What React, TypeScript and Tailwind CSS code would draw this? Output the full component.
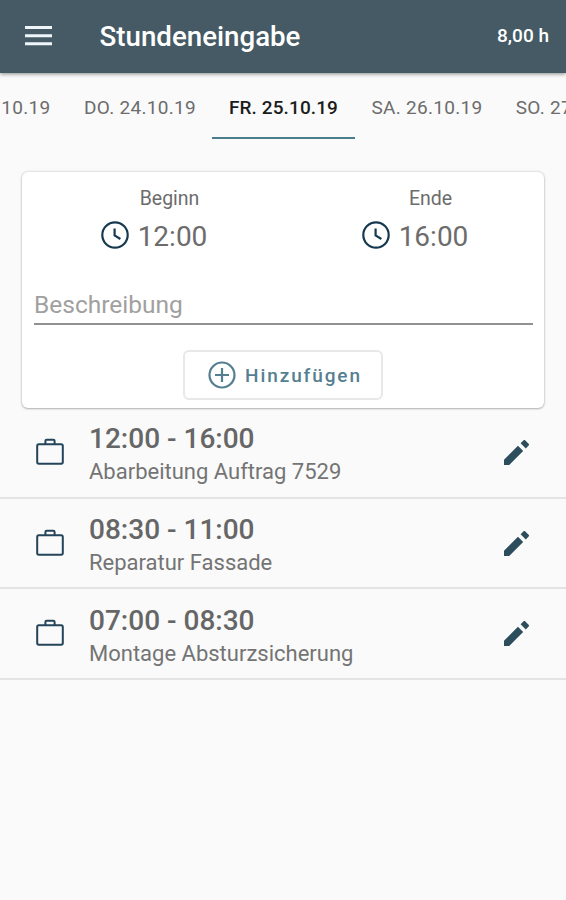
import React from "react";

const days = [
  { label: "MI. 23.10.19", active: false },
  { label: "DO. 24.10.19", active: false },
  { label: "FR. 25.10.19", active: true },
  { label: "SA. 26.10.19", active: false },
  { label: "SO. 27.10.19", active: false },
];

const entries = [
  { time: "12:00 - 16:00", text: "Abarbeitung Auftrag 7529" },
  { time: "08:30 - 11:00", text: "Reparatur Fassade" },
  { time: "07:00 - 08:30", text: "Montage Absturzsicherung" },
];

function ClockIcon() {
  return (
    <svg className="size-7 shrink-0" viewBox="0 0 28 28" fill="none" stroke="#173a50" strokeWidth="2.2">
      <circle cx="14" cy="14" r="12.7" />
      <path d="M13.6 7.4v7l5.8 3.6" />
    </svg>
  );
}

function BriefcaseIcon() {
  return (
    <svg className="mb-0.5 h-[27px] w-7 shrink-0" viewBox="0 0 28 27" fill="none" stroke="#24445a" strokeWidth="2">
      <rect x="1.2" y="6.3" width="25.6" height="19.4" rx="1.6" />
      <path d="M9.4 6.2V3q0-1.3 1.3-1.3h6.6q1.3 0 1.3 1.3v3.2" />
    </svg>
  );
}

function PencilIcon() {
  return (
    <svg className="mr-px size-[25px] shrink-0" viewBox="3 3 18 18" fill="#2b4d5c">
      <path d="M3 17.25V21h3.75L16.8 10.95l-3.75-3.75L3 17.25zM20.71 7.04a1 1 0 0 0 0-1.41l-2.34-2.34a1 1 0 0 0-1.41 0l-2 2 3.75 3.75 2-2z" />
    </svg>
  );
}

function TimeField({ label, value }: { label: string; value: string }) {
  return (
    <div className="flex flex-1 flex-col items-center">
      <span className="pl-[34px] text-[19.5px] leading-6">{label}</span>
      <div className="mt-[7px] flex h-[34px] items-center gap-[9px] pl-[3px]">
        <ClockIcon />
        <span className="pt-[3px] text-[28px] leading-8">{value}</span>
      </div>
    </div>
  );
}

export default function App() {
  return (
    <div className="h-[900px] w-full overflow-hidden bg-[#fafafa] font-['Roboto',sans-serif] text-[#6c6c6c]">
      <header className="relative flex h-[73px] items-center bg-[#455a64] pr-[17px] pl-[25px] text-white shadow-[0_1px_4px_rgba(0,0,0,0.45)]">
        <svg className="mb-[2px] h-5 w-[27px]" viewBox="0 0 27 20" fill="#eef6fa">
          <path d="M0 0h27v3H0zM0 8.2h27v3H0zM0 16.3h27v3H0z" />
        </svg>
        <h1 className="ml-[47.5px] text-[27.7px] leading-8 font-medium">Stundeneingabe</h1>
        <span className="ml-auto pb-px text-[19px] leading-6 font-medium">8,00 h</span>
      </header>

      <nav className="flex h-[66px] justify-center">
        {days.map((d) => (
          <div
            key={d.label}
            className={
              d.active
                ? "flex w-[143px] shrink-0 justify-center border-b-2 border-[#4a7c8c] pt-[23px] pl-px text-[19px] leading-6 font-medium tracking-[0.1px] whitespace-nowrap text-[#1c1c1c]"
                : "flex w-[144px] shrink-0 justify-center pt-[23px] pl-px text-[19px] leading-6 tracking-[0.28px] whitespace-nowrap"
            }
          >
            {d.label}
          </div>
        ))}
      </nav>

      <section className="mx-[22px] mt-[33px] h-[236px] rounded-md bg-white px-3 pt-[15px] shadow-[0_0_2px_1px_rgba(0,0,0,0.1),0_1px_2px_rgba(0,0,0,0.22)]">
        <div className="-mx-3 flex">
          <TimeField label="Beginn" value="12:00" />
          <TimeField label="Ende" value="16:00" />
        </div>
        <div className="-mr-px mt-[34px] h-[39px] border-b-2 border-[#919191] pt-[3px] text-[24.5px] leading-8 text-[#a0a0a0]">
          Beschreibung
        </div>
        <button className="mx-auto mt-[25px] flex h-[50px] w-[200px] items-center justify-center gap-[9px] rounded-md border-2 border-[#e8e8e8] pl-1 text-[#557f91]">
          <svg className="size-7" viewBox="0 0 28 28" fill="none" stroke="currentColor" strokeWidth="2.2">
            <circle cx="14" cy="14" r="12.5" />
            <path d="M14 7v14M7 14h14" />
          </svg>
          <span className="pt-px text-[19px] leading-6 font-medium tracking-[1.9px]">Hinzufügen</span>
        </button>
      </section>

      <ul>
        {entries.map((e) => (
          <li key={e.time} className="flex h-[90.7px] items-center border-b-2 border-[#e4e4e4] pr-9 pl-9">
            <BriefcaseIcon />
            <div className="ml-[25px] flex flex-col pt-2">
              <span className="text-[28px] leading-8 font-medium text-[#666666]">{e.time}</span>
              <span className="text-[22px] leading-[34px] text-[#747474]">{e.text}</span>
            </div>
            <div className="ml-auto">
              <PencilIcon />
            </div>
          </li>
        ))}
      </ul>
    </div>
  );
}
